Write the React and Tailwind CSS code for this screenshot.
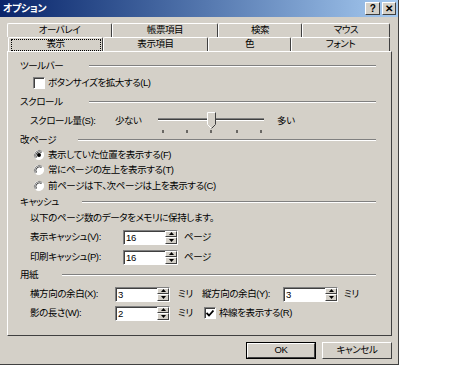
import React from 'react'

const face = 'bg-[#d4d0c8]'
const raised = 'border border-t-white border-l-white border-r-[#404040] border-b-[#404040]'
const sunken = 'border border-t-[#808080] border-l-[#808080] border-r-white border-b-white [box-shadow:inset_1px_1px_0_#404040]'

function Group({ label, w }) {
  return (
    <div className="flex h-[14px] items-center">
      <div className={`shrink-0 ${w}`}>{label}</div>
      <div className="h-[2px] flex-1 border-t border-t-[#808080] border-b border-b-white" />
    </div>
  )
}

function Check({ checked }) {
  return (
    <div className={`flex h-[12px] w-[12px] shrink-0 items-center justify-center bg-white ${sunken}`}>
      {checked && (
        <svg width="8" height="7" viewBox="0 0 8 7">
          <path d="M0.5 3 L3 5.5 L7.5 0.5" stroke="#000" strokeWidth="1.8" fill="none" />
        </svg>
      )}
    </div>
  )
}

function Radio({ checked }) {
  return (
    <svg width="12" height="12" viewBox="0 0 12 12" className="shrink-0">
      <circle cx="6" cy="6" r="5" fill="#fff" />
      <path d="M9.5 2.5 A5 5 0 0 0 2.5 9.5" stroke="#808080" strokeWidth="1" fill="none" />
      <path d="M8.5 3.5 A3.6 3.6 0 0 0 3.5 8.5" stroke="#404040" strokeWidth="1" fill="none" />
      <path d="M2.5 9.5 A5 5 0 0 0 9.5 2.5" stroke="#fff" strokeWidth="1" fill="none" />
      {checked && <circle cx="6" cy="6" r="2" fill="#000" />}
    </svg>
  )
}

function Arrow({ up }) {
  return (
    <div className={`flex flex-1 items-center justify-center ${face} ${raised}`}>
      <svg width="5" height="3" viewBox="0 0 5 3">
        <path d={up ? 'M2.5 0 L5 3 H0 Z' : 'M0 0 H5 L2.5 3 Z'} fill="#000" />
      </svg>
    </div>
  )
}

function SpinBox({ value }) {
  return (
    <div className={`flex h-[15px] w-[55px] shrink-0 bg-white ${sunken}`}>
      <div className="flex-1 pl-[2px] leading-[13px]">{value}</div>
      <div className="flex w-[12px] flex-col">
        <Arrow up />
        <Arrow />
      </div>
    </div>
  )
}

function Slider() {
  const ticks = [5, 29, 53, 79, 103]
  return (
    <svg width="108" height="24" viewBox="0 0 108 24" className="shrink-0">
      <line x1="0" y1="9.5" x2="106" y2="9.5" stroke="#808080" />
      <line x1="0" y1="10.5" x2="106" y2="10.5" stroke="#404040" />
      <line x1="0" y1="11.5" x2="106" y2="11.5" stroke="#fff" />
      <path d="M49.5 3.5 H57.5 V15.5 L53.5 19.5 L49.5 15.5 Z" fill="#d4d0c8" stroke="#fff" />
      <path d="M57.5 3.5 V15.5 L53.5 19.5" fill="none" stroke="#404040" />
      {ticks.map((x) => (
        <line key={x} x1={x} y1="21" x2={x} y2="24" stroke="#000" />
      ))}
    </svg>
  )
}

function Tab({ label, w, active }) {
  return (
    <div className={`flex h-full shrink-0 items-center justify-center rounded-t-[2px] border-t border-l border-r border-t-white border-l-white border-r-[#404040] ${w}`}>
      {active ? (
        <div className="flex h-[12px] w-[90px] items-center justify-center border border-dotted border-black">{label}</div>
      ) : (
        label
      )}
    </div>
  )
}

export default function App() {
  return (
    <div className="h-[378px] w-[461px] whitespace-nowrap bg-white text-[9.5px] tracking-[-0.4px] text-black [font-family:'Liberation_Sans','Noto_Sans_CJK_JP',sans-serif] [font-feature-settings:'palt']">
      <div className={`flex h-[365px] w-[399px] flex-col border-r border-b border-r-[#404040] border-b-[#404040] ${face}`}>
        <div className="flex h-[17px] items-center justify-between bg-linear-to-r from-[#0a246a] to-[#a6caf0] pr-[2px] pl-[3px]">
          <span className="text-[10px] font-bold text-white">オプション</span>
          <div className="flex gap-[2px]">
            <div className={`flex h-[13px] w-[15px] items-center justify-center text-[10px] font-bold leading-none ${face} ${raised}`}>?</div>
            <div className={`flex h-[13px] w-[14px] items-center justify-center text-[10px] font-bold leading-none ${face} ${raised}`}>✕</div>
          </div>
        </div>

        <div className="ml-[7px] mt-[6px] flex h-[14px]">
          <Tab label="オーバレイ" w="w-[105px]" />
          <Tab label="帳票項目" w="w-[106px]" />
          <Tab label="検索" w="w-[84px]" />
          <Tab label="マウス" w="w-[88px]" />
        </div>
        <div className="ml-[8px] flex h-[14px]">
          <Tab label="表示" w="w-[95px]" active />
          <Tab label="表示項目" w="w-[105px]" />
          <Tab label="色" w="w-[83px]" />
          <Tab label="フォント" w="w-[99px]" />
        </div>

        <div className="ml-[7px] flex h-[285px] w-[385px] flex-col border border-t-white border-l-white border-r-[#404040] border-b-[#404040] pt-[7px] pr-[15px] pl-[12px]">
          <Group label="ツールバー" w="w-[69px]" />
          <div className="mt-[3px] flex h-[14px] items-center gap-[3px] pl-[13px]">
            <Check />
            <span>ボタンサイズを拡大する(L)</span>
          </div>
          <div className="mt-[5px]">
            <Group label="スクロール" w="w-[69px]" />
          </div>
          <div className="mt-[5px] flex h-[14px] items-center pl-[10px]">
            <span className="w-[85px] shrink-0">スクロール量(S):</span>
            <span className="w-[43px] shrink-0">少ない</span>
            <Slider />
            <span className="ml-[11px]">多い</span>
          </div>
          <div className="mt-[5px]">
            <Group label="改ページ" w="w-[58px]" />
          </div>
          <div className="mt-[1px] flex h-[14px] items-center gap-[3px] pl-[13px]">
            <Radio checked />
            <span>表示していた位置を表示する(F)</span>
          </div>
          <div className="mt-[1px] flex h-[14px] items-center gap-[3px] pl-[13px]">
            <Radio />
            <span>常にページの左上を表示する(T)</span>
          </div>
          <div className="mt-[2px] flex h-[14px] items-center gap-[3px] pl-[13px]">
            <Radio />
            <span>前ページは下、次ページは上を表示する(C)</span>
          </div>
          <div className="mt-[2px]">
            <Group label="キャッシュ" w="w-[62px]" />
          </div>
          <div className="mt-[2px] flex h-[14px] items-center pl-[10px]">以下のページ数のデータをメモリに保持します。</div>
          <div className="mt-[5px] flex h-[14px] items-center pl-[10px]">
            <span className="w-[93px] shrink-0">表示キャッシュ(V):</span>
            <SpinBox value="16" />
            <span className="ml-[6px]">ページ</span>
          </div>
          <div className="mt-[6px] flex h-[14px] items-center pl-[10px]">
            <span className="w-[93px] shrink-0">印刷キャッシュ(P):</span>
            <SpinBox value="16" />
            <span className="ml-[6px]">ページ</span>
          </div>
          <div className="mt-[4px]">
            <Group label="用紙" w="w-[42px]" />
          </div>
          <div className="mt-[5px] flex h-[14px] items-center pl-[10px]">
            <span className="w-[85px] shrink-0">横方向の余白(X):</span>
            <SpinBox value="3" />
            <span className="ml-[8px] w-[24px] shrink-0">ミリ</span>
            <span className="w-[81px] shrink-0">縦方向の余白(Y):</span>
            <SpinBox value="3" />
            <span className="ml-[6px]">ミリ</span>
          </div>
          <div className="mt-[5px] flex h-[14px] items-center pl-[10px]">
            <span className="w-[85px] shrink-0">影の長さ(W):</span>
            <SpinBox value="2" />
            <span className="ml-[8px] w-[26px] shrink-0">ミリ</span>
            <Check checked />
            <span className="ml-[3px]">枠線を表示する(R)</span>
          </div>
        </div>

        <div className="mt-[6px] flex justify-end gap-[6px] pr-[6px]">
          <div className="flex h-[17px] w-[70px] items-center justify-center border border-black">
            <div className={`flex h-full w-full items-center justify-center ${raised}`}>OK</div>
          </div>
          <div className={`flex h-[17px] w-[70px] items-center justify-center ${raised}`}>キャンセル</div>
        </div>
      </div>
    </div>
  )
}
